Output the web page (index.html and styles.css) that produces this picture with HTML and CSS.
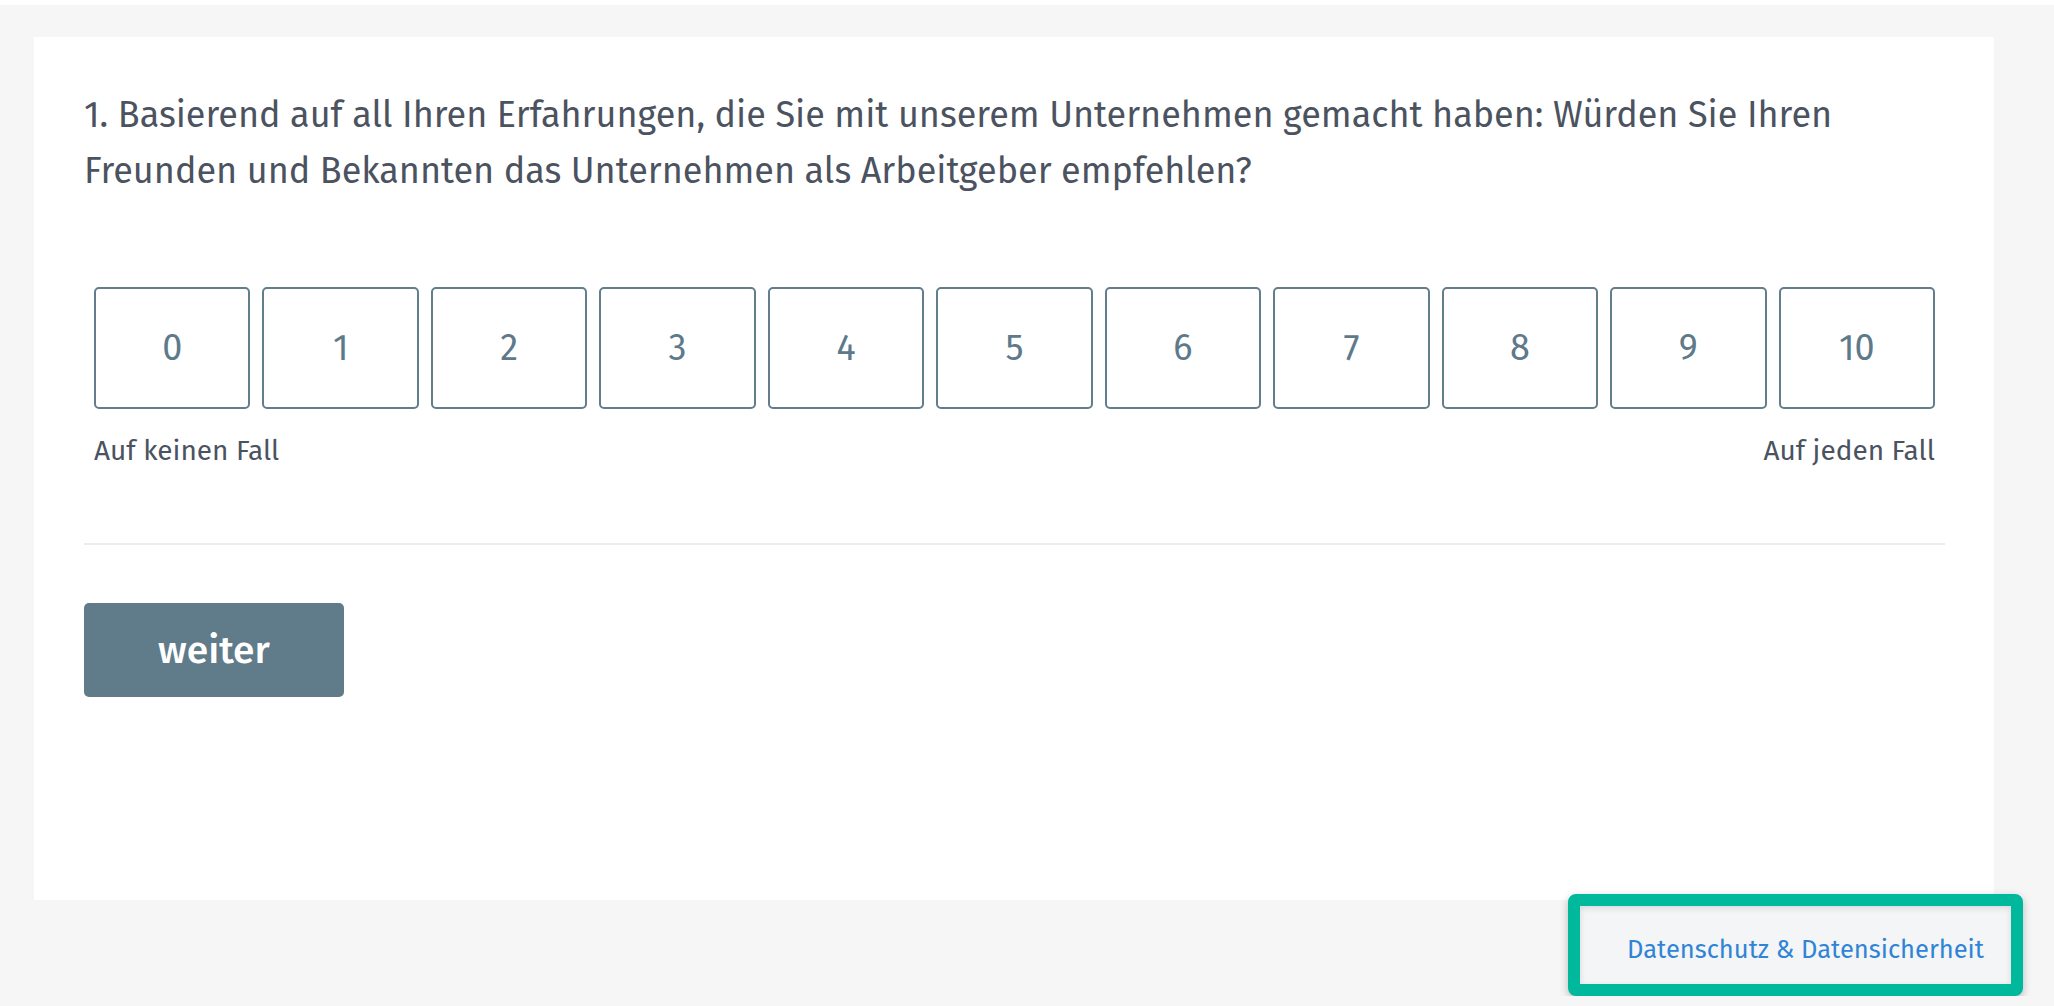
FILE: index.html
```html
<!DOCTYPE html>
<html lang="de">
<head>
    <meta charset="UTF-8">
    <meta name="viewport" content="width=device-width, initial-scale=1.0">
    <title>Umfrage</title>
    <link rel="stylesheet" href="styles.css">
</head>
<body>
    <div class="topbar"></div>

    <div class="page">
        <!-- Question card -->
        <div class="card">
            <p class="question">1. Basierend auf all Ihren Erfahrungen, die Sie mit unserem Unternehmen gemacht haben: Würden Sie Ihren Freunden und Bekannten das Unternehmen als Arbeitgeber empfehlen?</p>

            <div class="scale">
                <div class="scale-options">
                    <button class="option">0</button>
                    <button class="option">1</button>
                    <button class="option">2</button>
                    <button class="option">3</button>
                    <button class="option">4</button>
                    <button class="option">5</button>
                    <button class="option">6</button>
                    <button class="option">7</button>
                    <button class="option">8</button>
                    <button class="option">9</button>
                    <button class="option">10</button>
                </div>
                <div class="scale-labels">
                    <span>Auf keinen Fall</span>
                    <span>Auf jeden Fall</span>
                </div>
            </div>

            <hr class="divider">

            <button class="next">weiter</button>
        </div>

        <!-- Footer -->
        <div class="footer">
            <a class="footer-link" href="#">Datenschutz &amp; Datensicherheit</a>
        </div>
    </div>
</body>
</html>
```

FILE: styles.css
```css
/* General */
body {
    font-family: "Fira Sans", "Open Sans", "Noto Sans", sans-serif;
    background-color: #f6f6f6;
    margin: 0;
    padding: 0;
    color: #4b5260;
}
.topbar {
    height: 5px;
    background-color: #ffffff;
}
.page {
    padding: 32px 60px 0 34px;
}

/* Card */
.card {
    background-color: #ffffff;
    padding: 50px 49px 0 50px;
    height: 813px;
}
.question {
    margin: 0;
    font-size: 36px;
    line-height: 56px;
    color: #4b5260;
}

/* Scale */
.scale {
    margin: 88px 10px 0 10px;
}
.scale-options {
    display: flex;
    gap: 12px;
}
.option {
    flex: 1;
    height: 122px;
    background-color: #ffffff;
    border: 2px solid #627d8c;
    border-radius: 5px;
    font-family: inherit;
    font-size: 36px;
    color: #5e7a8a;
    cursor: pointer;
    padding: 0;
}
.scale-labels {
    display: flex;
    justify-content: space-between;
    margin-top: 27px;
    font-size: 28px;
    line-height: 30px;
    color: #4b5260;
}

.divider {
    border: 0;
    border-top: 2px solid #ececec;
    margin: 77px 0 0 0;
}

/* Button */
.next {
    margin-top: 58px;
    width: 260px;
    height: 94px;
    background-color: #607b8a;
    color: #ffffff;
    border: 0;
    border-radius: 5px;
    font-family: inherit;
    font-size: 39px;
    font-weight: 500;
    cursor: pointer;
}

/* Footer */
.footer {
    display: flex;
    justify-content: flex-end;
    margin: -6px -29px 0 0;
}
.footer-link {
    display: block;
    padding: 10px 27px 0 47px;
    line-height: 68px;
    font-size: 25.5px;
    color: #2f84d6;
    text-decoration: none;
    background-color: #f4f5f7;
    border: 12px solid #00b89c;
    border-radius: 8px;
    box-shadow: 0 3px 8px rgba(0, 0, 0, 0.25), inset 0 2px 6px rgba(0, 0, 0, 0.12);
}
```
